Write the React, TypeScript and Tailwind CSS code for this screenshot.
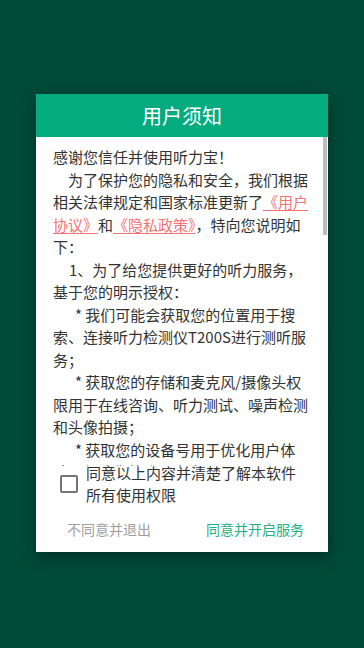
export default function App() {
  return (
    <div
      className="flex h-[648px] w-full justify-center bg-[#004a38] pt-[94px]"
      style={{ fontFamily: '"Noto Sans CJK SC", "Noto Sans", sans-serif' }}
    >
      <div className="flex h-[458px] w-[292px] flex-col bg-white shadow-[0_4px_14px_rgba(0,0,0,0.35)]">
        <div className="flex h-[43px] items-center justify-center bg-[#03ab7e] text-[20px] text-white">
          用户须知
        </div>

        <div className="relative h-[329px] overflow-hidden pl-[17px] pr-[18px] pt-[9px] text-[15px] leading-[22.5px] text-[#333333]">
          <p>感谢您信任并使用听力宝！</p>
          <p className="indent-[15px]">
            为了保护您的隐私和安全，我们根据相关法律规定和国家标准更新了
            <span className="text-[#f57373] underline underline-offset-2">《用户协议》</span>和
            <span className="text-[#f57373] underline underline-offset-2">《隐私政策》</span>
            ，特向您说明如下：
          </p>
          <p className="indent-[16px]">1、为了给您提供更好的听力服务，基于您的明示授权：</p>
          <p className="indent-[22px]">* 我们可能会获取您的位置用于搜索、连接听力检测仪T200S进行测听服务；</p>
          <p className="indent-[22px]">* 获取您的存储和麦克风/摄像头权限用于在线咨询、听力测试、噪声检测和头像拍摄；</p>
          <p className="indent-[22px]">* 获取您的设备号用于优化用户体验，保障您的账号安全；</p>
          <p className="indent-[16px]">2、我们会采取业界先进的安全措施保护您的信息安全。</p>

          <div className="absolute right-[1px] top-0 h-[98px] w-[4px] bg-[#bdbdbd]" />
        </div>

        <label className="-mt-[4px] flex items-center gap-[8px] pl-[24px] pr-[20px] text-[15px] leading-[22px] text-[#333333]">
          <span className="h-[18px] w-[18px] shrink-0 rounded-[2px] border-2 border-[#757575]" />
          <span>同意以上内容并清楚了解本软件所有使用权限</span>
        </label>

        <div className="flex flex-1 items-center text-[14px]">
          <button className="flex-1 text-center text-[#9e9e9e]">不同意并退出</button>
          <button className="flex-1 text-center text-[#22b281]">同意并开启服务</button>
        </div>
      </div>
    </div>
  );
}
